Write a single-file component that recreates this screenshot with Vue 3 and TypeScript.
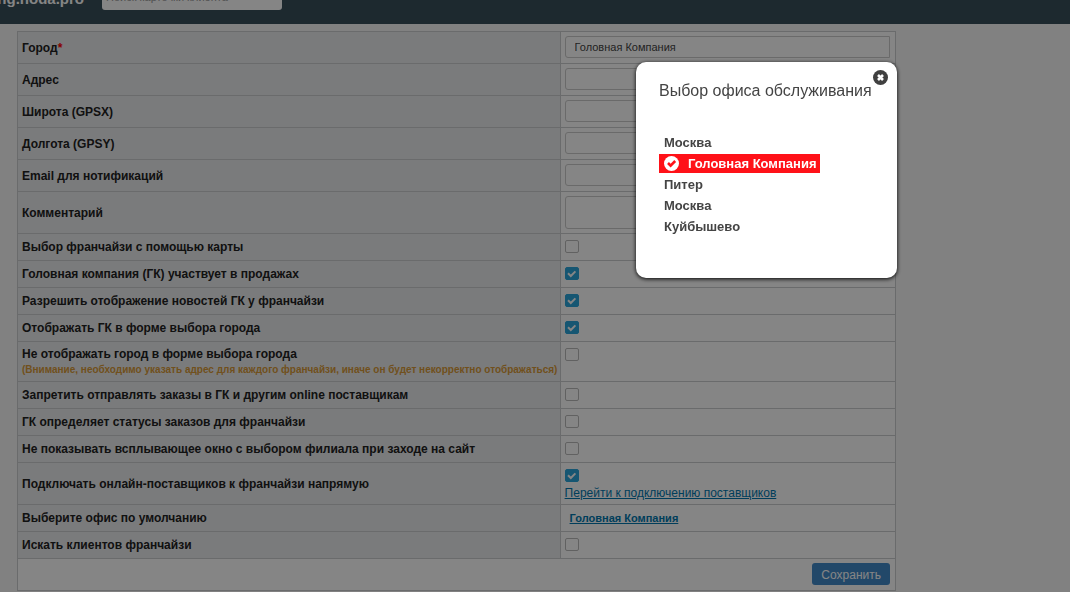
<script setup lang="ts">
import { ref } from 'vue'

interface Row {
  id: string
  label: string
  kind: 'text' | 'area' | 'check' | 'default'
  value?: string
  checked?: boolean
  required?: boolean
  note?: string
  link?: string
}

const rows = ref<Row[]>([
  { id: 'city', label: 'Город', kind: 'text', value: 'Головная Компания', required: true },
  { id: 'address', label: 'Адрес', kind: 'text', value: '' },
  { id: 'gpsx', label: 'Широта (GPSX)', kind: 'text', value: '' },
  { id: 'gpsy', label: 'Долгота (GPSY)', kind: 'text', value: '' },
  { id: 'email', label: 'Email для нотификаций', kind: 'text', value: '' },
  { id: 'comment', label: 'Комментарий', kind: 'area', value: '' },
  { id: 'map', label: 'Выбор франчайзи с помощью карты', kind: 'check', checked: false },
  { id: 'sales', label: 'Головная компания (ГК) участвует в продажах', kind: 'check', checked: true },
  { id: 'news', label: 'Разрешить отображение новостей ГК у франчайзи', kind: 'check', checked: true },
  { id: 'show', label: 'Отображать ГК в форме выбора города', kind: 'check', checked: true },
  {
    id: 'hide',
    label: 'Не отображать город в форме выбора города',
    kind: 'check',
    checked: false,
    note: '(Внимание, необходимо указать адрес для каждого франчайзи, иначе он будет некорректно отображаться)',
  },
  { id: 'forbid', label: 'Запретить отправлять заказы в ГК и другим online поставщикам', kind: 'check', checked: false },
  { id: 'status', label: 'ГК определяет статусы заказов для франчайзи', kind: 'check', checked: false },
  { id: 'popup', label: 'Не показывать всплывающее окно с выбором филиала при заходе на сайт', kind: 'check', checked: false },
  {
    id: 'direct',
    label: 'Подключать онлайн-поставщиков к франчайзи напрямую',
    kind: 'check',
    checked: true,
    link: 'Перейти к подключению поставщиков',
  },
  { id: 'office', label: 'Выберите офис по умолчанию', kind: 'default' },
  { id: 'search', label: 'Искать клиентов франчайзи', kind: 'check', checked: false },
])

const offices = ['Москва', 'Головная Компания', 'Питер', 'Москва', 'Куйбышево']
const selected = ref(1)
const open = ref(true)
</script>

<template>
  <div class="page">
    <header class="topbar">
      <span class="brand">ng.noda.pro</span>
      <input class="search" type="text" placeholder="Поиск карточки клиента" aria-label="Поиск карточки клиента" />
    </header>

    <form class="content" @submit.prevent>
      <table class="settings">
        <colgroup>
          <col class="col-label" />
          <col />
        </colgroup>
        <tbody>
          <tr v-for="row in rows" :key="row.id">
            <th scope="row" :class="{ noted: row.note }">
              <span v-if="row.kind === 'default'">{{ row.label }}</span>
              <label v-else :for="row.id">{{ row.label }}<span v-if="row.required" class="star">*</span></label>
              <small v-if="row.note" class="note">{{ row.note }}</small>
            </th>
            <td :class="['cell-' + row.kind, { linked: row.link }]">
              <input v-if="row.kind === 'text'" :id="row.id" v-model="row.value" class="field" type="text" />
              <textarea v-else-if="row.kind === 'area'" :id="row.id" v-model="row.value" class="field tall"></textarea>
              <a v-else-if="row.kind === 'default'" class="office-link" href="#" @click.prevent="open = true">{{ offices[selected] }}</a>
              <template v-else>
                <span class="tick">
                  <input :id="row.id" v-model="row.checked" type="checkbox" />
                  <svg v-if="row.checked" viewBox="0 0 14 13" aria-hidden="true">
                    <path d="M3 6.3 L5.8 9 L10.4 4.4" />
                  </svg>
                </span>
                <a v-if="row.link" class="link" href="#">{{ row.link }}</a>
              </template>
            </td>
          </tr>
          <tr>
            <td class="actions" colspan="2"><button class="save" type="submit">Сохранить</button></td>
          </tr>
        </tbody>
      </table>
    </form>

    <template v-if="open">
      <div class="shade"></div>
      <section class="dialog" role="dialog" aria-labelledby="dialog-title">
        <button class="close" type="button" aria-label="Закрыть" @click="open = false">
          <svg viewBox="0 0 15 15" aria-hidden="true">
            <circle cx="7.5" cy="7.5" r="7.5" />
            <path d="M5 5 L10 10 M10 5 L5 10" />
          </svg>
        </button>
        <h2 id="dialog-title">Выбор офиса обслуживания</h2>
        <ul>
          <li v-for="(office, i) in offices" :key="i">
            <button class="office" :class="{ active: i === selected }" type="button" @click="selected = i">
              <svg v-if="i === selected" viewBox="0 0 15 15" aria-hidden="true">
                <circle cx="7.5" cy="7.5" r="7.5" />
                <path d="M4 7 L6.6 9.6 L11.2 5" />
              </svg>
              {{ office }}
            </button>
          </li>
        </ul>
      </section>
    </template>
  </div>
</template>

<style>
body {
  background: #f8f8f8;
  overflow: hidden;
}
</style>

<style scoped>
.page {
  font: 12px/16px "Liberation Sans", Arial, sans-serif;
  color: #222;
}

.page * {
  box-sizing: border-box;
}

.topbar {
  display: flex;
  align-items: flex-end;
  gap: 18px;
  height: 24px;
  padding-bottom: 14px;
  overflow: hidden;
  background: #394f5a;
}

.brand {
  display: flex;
  justify-content: flex-end;
  width: 84px;
  padding-bottom: 2px;
  font-size: 15px;
  font-weight: bold;
  line-height: 18px;
  color: #fff;
}

.search {
  width: 180px;
  height: 24px;
  padding: 0 4px 2px;
  border: 0;
  border-radius: 3px;
  background: #fff;
  font: 11px/16px "Liberation Sans", Arial, sans-serif;
}

.search::placeholder {
  color: #999;
}

.content {
  margin: 7px 174px 0 17px;
}

.settings {
  width: 100%;
  table-layout: fixed;
  border-collapse: collapse;
  background: #fff;
}

.col-label {
  width: 61.8%;
}

th,
td {
  height: 27px;
  padding: 0 4px;
  border: 1px solid #ccced0;
  text-align: left;
  vertical-align: middle;
}

th {
  background: #eaebee;
  font-weight: bold;
  white-space: nowrap;
}

label {
  display: block;
}

.star {
  color: #f00;
}

.noted {
  height: 40px;
}

.note {
  display: block;
  font-size: 10px;
  line-height: 16px;
  color: #d89a38;
}

.cell-text,
.cell-area,
.actions {
  height: 32px;
  padding: 4px 5px 4px 4px;
  vertical-align: top;
}

.cell-area {
  height: 42px;
}

.cell-check {
  vertical-align: top;
  padding-top: 6px;
}

.linked {
  height: 42px;
}

.field {
  display: block;
  width: 100%;
  height: 22px;
  margin: 0;
  padding: 0 9px;
  border: 1px solid #ccc;
  border-radius: 3px 0 0 3px;
  background: #fff;
  color: #444;
  font-family: inherit;
  font-size: 11px;
  resize: none;
}

.tall {
  height: 33px;
}

.tick {
  display: grid;
  width: 14px;
  height: 13px;
}

.tick > * {
  grid-area: 1 / 1;
  width: 14px;
  height: 13px;
}

.tick input {
  appearance: none;
  margin: 0;
  border: 1px solid #bbb;
  border-radius: 2px;
  background: #fff;
}

.tick input:checked {
  border-color: #2ba6db;
  background: #2ba6db;
}

.tick svg {
  pointer-events: none;
  fill: none;
  stroke: #fff;
  stroke-width: 2;
}

.link,
.office-link {
  color: #0078ae;
}

.link {
  display: block;
  margin-top: 3px;
}

.office-link {
  margin-left: 5px;
  font-size: 11px;
  font-weight: bold;
}

.save {
  display: block;
  height: 22px;
  margin-left: auto;
  padding: 1px 9px 0;
  border: 0;
  border-radius: 3px;
  background: #428bca;
  color: #fff;
  font: inherit;
}

.shade {
  position: fixed;
  inset: 0;
  background: rgba(0, 0, 0, 0.48);
}

.dialog {
  position: fixed;
  top: 62px;
  right: 173px;
  min-width: 261px;
  padding: 19px 23px 42px;
  border-radius: 10px;
  background: #fff;
  box-shadow: 0 1px 4px #000;
  color: #444;
}

.dialog h2 {
  margin: 0 0 32px;
  font-size: 16px;
  font-weight: normal;
  line-height: 20px;
}

.dialog ul {
  display: grid;
  gap: 2px;
  margin: 0;
  padding: 0;
  list-style: none;
}

.dialog li {
  display: flex;
}

.office {
  display: flex;
  align-items: center;
  gap: 9px;
  height: 19px;
  padding: 0 4px 0 5px;
  border: 0;
  background: none;
  color: #444;
  font: bold 13px/19px "Liberation Sans", Arial, sans-serif;
}

.office.active {
  background: #ff1118;
  color: #fff;
}

.office svg {
  width: 15px;
  height: 15px;
  fill: #fff;
}

.office path {
  fill: none;
  stroke: #ff1118;
  stroke-width: 2.6;
}

.close {
  position: absolute;
  top: 8px;
  right: 9px;
  width: 15px;
  height: 15px;
  padding: 0;
  border: 0;
  background: none;
}

.close svg {
  display: block;
  fill: #404040;
}

.close path {
  stroke: #fff;
  stroke-width: 2.6;
}
</style>
